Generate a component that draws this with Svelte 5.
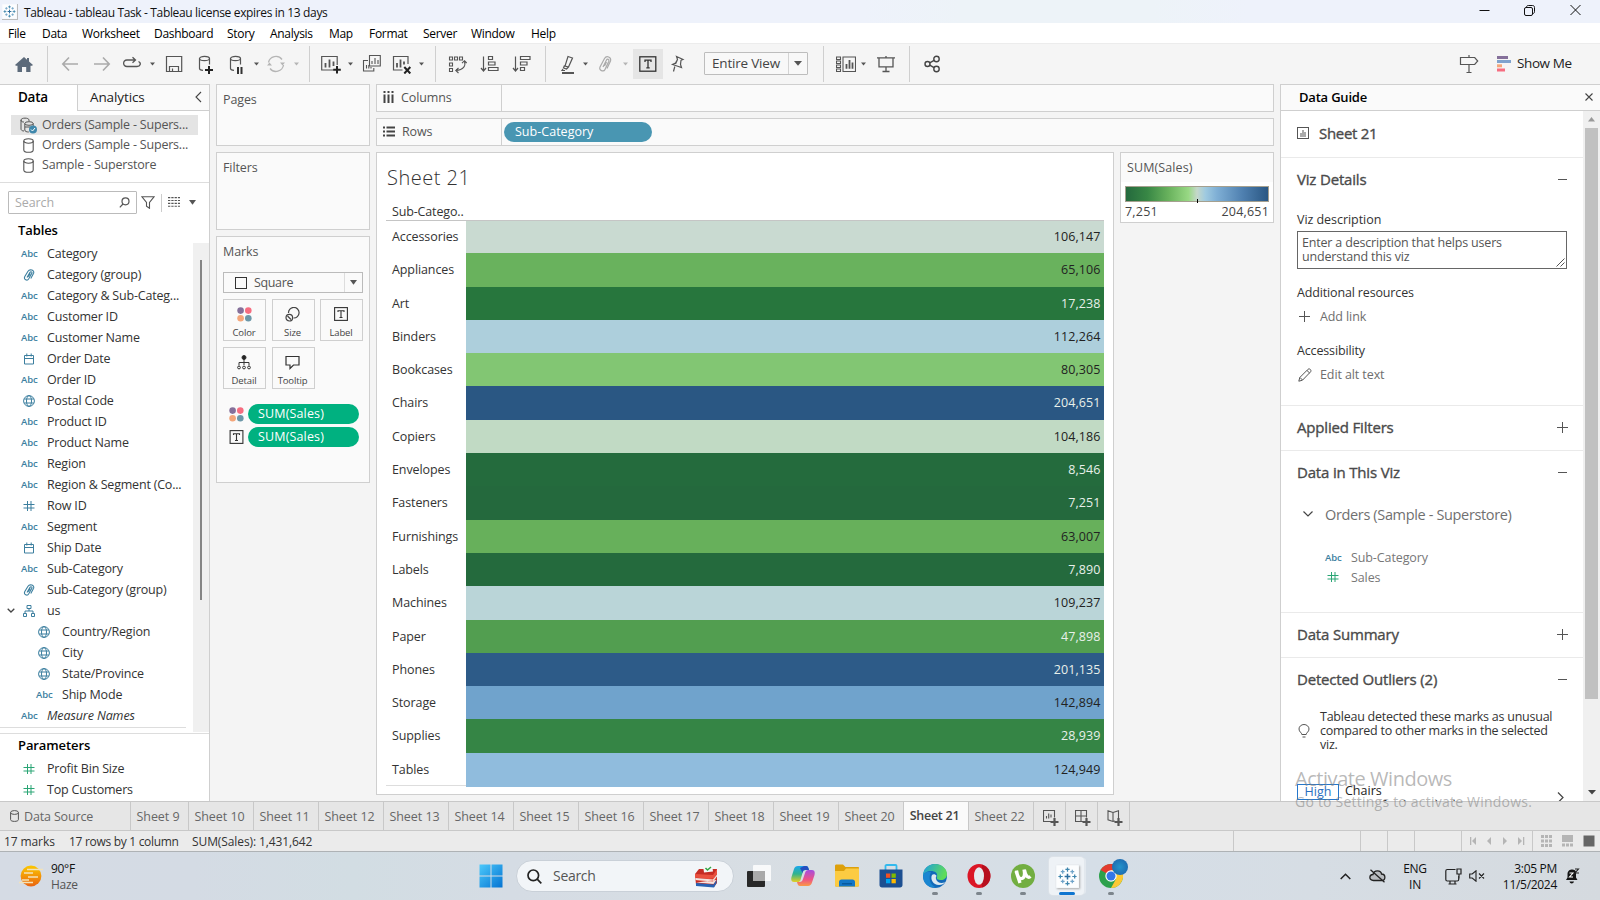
<script>
  const menus = [['File', 34], ['Data', 40], ['Worksheet', 72], ['Dashboard', 73], ['Story', 43], ['Analysis', 59], ['Map', 40], ['Format', 54], ['Server', 48], ['Window', 60], ['Help', 40]];

  const sources = [
    { name: 'Orders (Sample - Supers...', primary: true },
    { name: 'Orders (Sample - Supers...' },
    { name: 'Sample - Superstore' }
  ];

  const fields = [
    ['abc', 'Category'], ['clip', 'Category (group)'], ['abc', 'Category & Sub-Categ...'],
    ['abc', 'Customer ID'], ['abc', 'Customer Name'], ['date', 'Order Date'], ['abc', 'Order ID'],
    ['geo', 'Postal Code'], ['abc', 'Product ID'], ['abc', 'Product Name'], ['abc', 'Region'],
    ['abc', 'Region & Segment (Co...'], ['num', 'Row ID'], ['abc', 'Segment'], ['date', 'Ship Date'],
    ['abc', 'Sub-Category'], ['clip', 'Sub-Category (group)'], ['tree', 'us', 'open'],
    ['geo', 'Country/Region', 'child'], ['geo', 'City', 'child'], ['geo', 'State/Province', 'child'],
    ['abc', 'Ship Mode', 'child'], ['abc', 'Measure Names', 'italic']
  ];

  const rows = [
    ['Accessories', '106,147', '#c9dad1'], ['Appliances', '65,106', '#69b25d'],
    ['Art', '17,238', '#27763d', true], ['Binders', '112,264', '#adcfdc'],
    ['Bookcases', '80,305', '#82c673'], ['Chairs', '204,651', '#2a5783', true],
    ['Copiers', '104,186', '#c1dac4'], ['Envelopes', '8,546', '#246b3d', true],
    ['Fasteners', '7,251', '#24693d', true], ['Furnishings', '63,007', '#67b05b'],
    ['Labels', '7,890', '#246a3d', true], ['Machines', '109,237', '#bad5d8'],
    ['Paper', '47,898', '#529e50', true], ['Phones', '201,135', '#2d5b88', true],
    ['Storage', '142,894', '#70a3cc'], ['Supplies', '28,939', '#358545', true],
    ['Tables', '124,949', '#90bcdd']
  ];

  const sheets = ['Sheet 9', 'Sheet 10', 'Sheet 11', 'Sheet 12', 'Sheet 13', 'Sheet 14', 'Sheet 15', 'Sheet 16', 'Sheet 17', 'Sheet 18', 'Sheet 19', 'Sheet 20', 'Sheet 21', 'Sheet 22'];
</script>

{#snippet caret(dim)}
  <svg class="ic" width="7" height="20" viewBox="0 0 7 20"><path d="M1 8.500h5L3.500 11.500z" fill={dim ? '#b5b5b5' : '#555'} /></svg>
{/snippet}

{#snippet cylinder()}
  <svg width="11" height="15" viewBox="0 0 11 15" fill="none" stroke="#555" stroke-width="1.1"><ellipse cx="5.5" cy="3" rx="4.7" ry="2.2" /><path d="M.8 3v9c0 1.4 2 2.3 4.7 2.3s4.7-.9 4.7-2.3V3" /></svg>
{/snippet}

{#snippet dots()}
  <svg width="15" height="15" viewBox="0 0 15 15"><circle cx="3.6" cy="3.6" r="3.3" fill="#85709a" /><circle cx="11.3" cy="3.6" r="3.3" fill="#f66d80" /><circle cx="3.6" cy="11.3" r="3.3" fill="#f4a67a" /><circle cx="11.3" cy="11.3" r="3.3" fill="#6c97a8" /></svg>
{/snippet}

{#snippet tbox()}
  <svg width="14" height="14" viewBox="0 0 14 14" fill="none" stroke="#333" stroke-width="1.1"><rect x=".6" y=".6" width="12.8" height="12.8" /><path d="M4 5V3.7h6V5M7 3.7v6.8M5.5 10.5h3" /></svg>
{/snippet}

{#snippet fieldIcon(kind)}
  {#if kind === 'abc'}
    <span class="abc">Abc</span>
  {:else}
    <svg width="12" height="12" viewBox="0 0 12 12" fill="none" stroke="currentColor" stroke-width="1">
      {#if kind === 'clip'}
        <path d="M4 8.500 7 3.400c.8-1.300 2.500-.4 1.800.9L5.600 10C4.300 12.200.3 10.700 1.800 7.500L5 2.200C6.700-.4 11.800 1.200 10.600 4.200L7.800 9.400M5.300 7.700 7.200 4.500" stroke-width="1.1" />
      {:else if kind === 'date'}
        <path d="M1.500 2.500h9v8.500h-9zM1.500 5.500h9M3.800.500v3M8.200.500v3" />
      {:else if kind === 'geo'}
        <circle cx="6" cy="6" r="5.400" /><ellipse cx="6" cy="6" rx="2.500" ry="5.400" /><path d="M1.200 4h9.600M1.200 8h9.600" />
      {:else if kind === 'num'}
        <path d="M4.500 1v10M8 1v10M.500 4.500h11M.500 8h11" />
      {:else}
        <path d="M4 .500h4v3H4zM.500 8.500h3v3h-3zM8.500 8.500h3v3h-3zM6 3.500V6M2 8.500V6h8v2.500" />
      {/if}
    </svg>
  {/if}
{/snippet}

{#snippet tableauMark(size)}
  <svg width={size} height={size} viewBox="0 0 24 24" fill="none">
    <rect x=".5" y=".5" width="23" height="23" fill="#fcfdfe" />
    <path d="M12 9v6M9 12h6" stroke="#2f6f9f" stroke-width="1.6" />
    <path d="M12 2.500v4.500M9.800 4.500h4.400M12 17v4.500M9.800 19.500h4.400M2.500 12H7M4.500 9.800v4.400M17 12h4.500M19.500 9.800v4.400" stroke="#3f86ad" stroke-width="1.3" />
    <path d="M7 5v4M5 7h4M17 5v4M15 7h4M7 15v4M5 17h4M17 15v4M15 17h4" stroke="#6fa3c8" stroke-width="1.3" />
  </svg>
{/snippet}

{#snippet plus()}
  <svg width="11" height="11" viewBox="0 0 11 11" stroke="#555"><path d="M5.500 0v11M0 5.500h11" /></svg>
{/snippet}
{#snippet minus()}
  <svg width="11" height="11" viewBox="0 0 11 11" stroke="#555"><path d="M1 5.500h9" /></svg>
{/snippet}

<div class="screen">
  <header class="title">
    <span class="appicon">{@render tableauMark(15)}</span>
    <span class="titletext">Tableau - tableau Task - Tableau license expires in 13 days</span>
    <svg class="win" width="102" height="14" viewBox="0 0 102 14" fill="none" stroke="#111" stroke-width="1"><path d="M.500 7.500h10M91.500 2l10 10M101.500 2l-10 10" /><rect x="45.5" y="4.5" width="8" height="8" rx="1.5" /><path d="M47.500 4.300C47.500 3 48.300 2.500 49.300 2.500h4.200c1.300 0 2 .7 2 2v4.200c0 1-.5 1.800-1.800 1.800" /></svg>
  </header>

  <nav class="menu">
    {#each menus as [m, w]}<span style="width:{w}px">{m}</span>{/each}
  </nav>

  <div class="toolbar">
    <svg class="ic" width="20" height="20" viewBox="0 0 20 20"><path d="M1 11 10 3l3 2.700V4h2v3.500L19 11l-1 .8h-1.500V18h-4.300v-5H8v5H3.500v-6.200H2z" fill="#5c6a7a" /></svg>
    <i class="sep"></i>
    <svg class="ic" width="20" height="20" viewBox="0 0 20 20" fill="none" stroke="#aaa" stroke-width="1.6"><path d="M18 10H3M9 3.500 2.800 10 9 16.500" /></svg>
    <svg class="ic" width="20" height="20" viewBox="0 0 20 20" fill="none" stroke="#aaa" stroke-width="1.6"><path d="M2 10h15M11 3.500l6.200 6.500L11 16.500" /></svg>
    <svg class="ic" width="20" height="20" viewBox="0 0 20 20" fill="none" stroke="#555" stroke-width="1.3"><path d="M16.500 7.500c3 1.300 2 5-1.500 5H5c-4.500 0-4.500-6.500 0-6.500h8M10.500 3.200l3 2.800-3 2.800" /></svg>
    {@render caret()}
    <svg class="ic" width="20" height="20" viewBox="0 0 20 20" fill="none" stroke="#555" stroke-width="1.2"><path d="M2.500 2.500h15.200v15H2.500zM5.500 17.500v-5h9v5M8.500 17v-2.500" /></svg>
    <svg class="ic" width="20" height="20" viewBox="0 0 20 20" fill="none" stroke="#555" stroke-width="1.2"><ellipse cx="7.5" cy="4.5" rx="5" ry="2.2" /><path d="M2.500 4.500v10c0 1 1.500 1.700 3.500 1.900M12.500 4.500v6" /><path d="M12 12v8M8 16h8" stroke="#222" stroke-width="2" /></svg>
    <svg class="ic" width="20" height="20" viewBox="0 0 20 20" fill="none" stroke="#555" stroke-width="1.2"><ellipse cx="7.5" cy="4.5" rx="5" ry="2.2" /><path d="M2.500 4.500v10c0 1 1.500 1.700 3.500 1.900M12.500 4.500v6" /><path d="M10 13v7M13.500 13v7" stroke="#333" stroke-width="2" /></svg>
    {@render caret()}
    <svg class="ic" width="20" height="20" viewBox="0 0 20 20" fill="none" stroke="#b5b5b5" stroke-width="1.3"><path d="M2.500 8.500A7.600 7.600 0 0 1 16 5.500M17.500 11A7.600 7.600 0 0 1 4 14.500" /><path d="M14 8.500h5l-2.500 3zM1 11.500h5l-2.500-3z" fill="#b5b5b5" stroke="none" /></svg>
    {@render caret(true)}
    <i class="sep"></i>
    <svg class="ic" width="20" height="20" viewBox="0 0 20 20" fill="none" stroke="#555" stroke-width="1.2"><path d="M12.500 16H.7V2.500h15.500V11" /><path d="M4.500 13.500V9M8.500 13.500V5.500M12.500 12V7.500" stroke-width="1.8" /><path d="M16 12v7.500M12.200 15.700h7.600" stroke="#222" stroke-width="2" /></svg>
    {@render caret()}
    <svg class="ic" width="20" height="20" viewBox="0 0 20 20" fill="none" stroke="#555" stroke-width="1.1"><path d="M7.500 1.500h10.800V12H7.500zM6 6.500H1.500V17h10.300v-3M10 10V7M13 10V4M16 10V6M4.500 14.500V11M6.800 14.500V11M9 14.500V13" /></svg>
    <svg class="ic" width="20" height="20" viewBox="0 0 20 20" fill="none" stroke="#555" stroke-width="1.2"><path d="M10.500 16H1.500V2.500H16V10" /><path d="M5 13.500V9M8.500 13.500V5.500M12 10.500V7.500" stroke-width="1.8" /><path d="M12.300 13l6 6.500M18.300 13l-6 6.500" stroke="#222" stroke-width="2" /></svg>
    {@render caret()}
    <i class="sep"></i>
    <svg class="ic" width="20" height="20" viewBox="0 0 20 20" fill="none" stroke="#555" stroke-width="1.1"><path d="M1.500 3h3v3h-3zM6.500 3h3v3h-3zM11.500 3h3v3h-3zM1.500 9h3v3h-3zM1.500 14.500h3v3h-3zM16.500 7c1.500 5-1 9-8.500 9.500M14 9.200 16.500 6.700 18.700 9M10.500 14l-2.700 2.500 2.700 2.500" /></svg>
    <svg class="ic" width="20" height="20" viewBox="0 0 20 20" fill="none" stroke="#555" stroke-width="1.2"><path d="M3.500 2.500v14M1 14l2.500 3L6 14M8.500 2.500h4v3h-4zM8.500 8h6.500v3H8.500zM8.500 13.500h9.500v3H8.500z" /></svg>
    <svg class="ic" width="20" height="20" viewBox="0 0 20 20" fill="none" stroke="#555" stroke-width="1.2"><path d="M3.500 2.500v14M1 14l2.500 3L6 14M8.500 2.500H18v3H8.500zM8.500 8H15v3H8.500zM8.500 13.500h4v3h-4z" /></svg>
    <i class="sep"></i>
    <svg class="ic" width="20" height="20" viewBox="0 0 20 20" fill="none" stroke="#555" stroke-width="1.2"><path d="M9 2.500l4.500 1.500-4 9-3.500-1zM5.500 11.500l-1 2.500 3 1 1.500-1.500M4 15l-1 1.500h3" /><path d="M3 19h12" stroke-width="2" /></svg>
    {@render caret()}
    <svg class="ic" width="20" height="20" viewBox="0 0 20 20" fill="none" stroke="#aaa" stroke-width="1.2"><path d="M7 13l3.500-7c.8-1.500 3-.5 2.300 1.200L9 15.500c-1.300 2.800-6.500 1-5-2.500l4.500-8.500C10.500 1 15.600 3 14.500 7L11 14.500M8.500 12l2-4" /></svg>
    {@render caret(true)}
    <span class="ton"><svg width="18" height="16" viewBox="0 0 18 16" fill="none" stroke="#333" stroke-width="1.3"><rect x=".8" y=".8" width="16" height="14.4" /><path d="M6 6V4.200h6V6M9 4.200v7.600M7.300 11.800h3.400" /></svg></span>
    <svg class="ic" width="20" height="20" viewBox="0 0 20 20" fill="none" stroke="#555" stroke-width="1.2"><path d="M9.500 2.500l6.500 3-2 .8-.5 4.200 1 3-4.500-1.500-4.500-1.500 3-1.500 2-3.500zM7.800 12.500 6.500 17.500M10.500 5.500 8.500 10" /></svg>
    <span class="combo"><b>Entire View</b><em><svg width="8" height="5" viewBox="0 0 8 5"><path d="M0 0h8L4 4.800z" fill="#555" /></svg></em></span>
    <i class="sep"></i>
    <svg class="ic" width="20" height="20" viewBox="0 0 20 20" fill="none" stroke="#555" stroke-width="1.1"><path d="M.500 3h4v2.500h-4zM.500 7h4v2.500h-4zM.500 11h4v2.500h-4zM.500 15h4v2.500h-4zM7 3h12.500v14.500H7z" /><path d="M10.500 14.800V10M13.500 14.800V6M16.500 14.800V8.500" stroke-width="1.8" /></svg>
    {@render caret()}
    <svg class="ic" width="20" height="20" viewBox="0 0 20 20" fill="none" stroke="#555" stroke-width="1.3"><path d="M1 3.800h18M3 3.800v9h14v-9M10 2v2M10 12.800V17M6.500 17.500h7" /></svg>
    <i class="sep"></i>
    <svg class="ic" width="20" height="20" viewBox="0 0 20 20" fill="none" stroke="#444" stroke-width="1.4"><circle cx="4.5" cy="10" r="2.5" /><circle cx="13.5" cy="5" r="2.7" /><circle cx="13.5" cy="15" r="2.7" /><path d="M6.700 8.800l4.400-2.500M6.700 11.200l4.400 2.500" /></svg>
    <svg class="ic" width="20" height="20" viewBox="0 0 20 20" fill="none" stroke="#555" stroke-width="1.2"><path d="M10 1v2M1.500 3.500h14.200l3 3.500-3 3.500H1.500zM10 10.500V18M7.500 18.500h5" /></svg>
    <span class="showme"><svg width="15" height="16" viewBox="0 0 15 16"><path d="M0 0h11v3H0z" fill="#85709a" /><path d="M0 4h14v3H0z" fill="#7fa2cd" /><path d="M0 8.300h5v3H0z" fill="#f4a67a" /><path d="M0 12.500h8v3H0z" fill="#f66d80" /></svg>Show Me</span>
  </div>

  <main>
    <aside class="data">
      <div class="tabs"><span class="on">Data</span><span class="off">Analytics<svg width="7" height="12" viewBox="0 0 7 12" fill="none" stroke="#444" stroke-width="1.1"><path d="M6 1 1 6l5 5" /></svg></span></div>
      <div class="sources">
        {#each sources as s}
          <div class="source" class:sel={s.primary}>
            <span class="sicon">
              {#if s.primary}
                <svg width="18" height="17" viewBox="0 0 18 17" fill="none" stroke="#555"><path d="M1 3c0-2.500 8-2.500 8 0M1 3c0 2 2 2 3 2M1 3v9c0 1 1 2 3 2M9 3v1" /><ellipse cx="9" cy="6.5" rx="4.2" ry="1.8" /><path d="M4.800 6.500V13c0 1.500 2 2 4 2M13.200 6.500V9M5 10h5" /><circle cx="13" cy="12.5" r="4" fill="#3f88ac" stroke="none" /><path d="M11 12.500l1.500 1.500 2.500-3" stroke="#fff" /></svg>
              {:else}{@render cylinder()}{/if}
            </span>{s.name}
          </div>
        {/each}
      </div>
      <div class="find">
        <span class="box">Search<svg width="11" height="11" viewBox="0 0 11 11" fill="none" stroke="#555" stroke-width="1.2"><circle cx="6.5" cy="4.3" r="3.5" /><path d="M4 7 .8 10.300" /></svg></span>
        <svg class="funnel" width="14" height="13" viewBox="0 0 14 13" fill="none" stroke="#555" stroke-width="1.1"><path d="M.8.7h12.400L8.500 6.500v5.800l-3-2V6.500z" /></svg>
        <i></i>
        <svg class="grid" width="12" height="10" viewBox="0 0 12 10" stroke="#555" stroke-width="1.1"><path d="M0 .600h12M0 3.500h12M0 6.400h12M0 9.300h12" stroke-dasharray="2.3 1" /></svg>
        <svg class="dn" width="7" height="5" viewBox="0 0 7 5"><path d="M0 0h7L3.500 4.800z" fill="#555" /></svg>
      </div>
      <h3>Tables</h3>
      <div class="listwrap">
        <div class="list">
          {#each fields as [kind, name, mode]}
            <div class="field {mode ?? ''}">
              <span class="chev">{#if mode === 'open'}<svg width="8" height="5" viewBox="0 0 8 5" fill="none" stroke="#444" stroke-width="1.3"><path d="M.7.7 4 4 7.300.7" /></svg>{/if}</span>
              <span class="fi">{@render fieldIcon(kind)}</span><span>{name}</span>
            </div>
          {/each}
        </div>
        <div class="track"><div></div></div>
      </div>
      <div class="params">
        <h3>Parameters</h3>
        {#each ['Profit Bin Size', 'Top Customers'] as p}
          <div class="field"><span class="chev"></span><span class="fi green">{@render fieldIcon('num')}</span><span>{p}</span></div>
        {/each}
      </div>
    </aside>

    <section class="cards">
      <div class="card pages">Pages</div>
      <div class="card filters">Filters</div>
      <div class="card marks">Marks
        <div class="marktype"><i></i><span>Square</span><em><svg width="7" height="5" viewBox="0 0 7 5"><path d="M0 0h7L3.500 4.800z" fill="#555" /></svg></em></div>
        <div class="btns">
          <div>{@render dots()}<span>Color</span></div>
          <div><svg width="15" height="15" viewBox="0 0 15 15" fill="none" stroke="#444" stroke-width="1.2"><path d="M3.500 6A5.300 5.300 0 1 1 8.500 11" /><circle cx="4.3" cy="10.7" r="3.3" /><path d="M2.500 9l3.500 3.500" /></svg><span>Size</span></div>
          <div>{@render tbox()}<span>Label</span></div>
          <div><svg width="14" height="15" viewBox="0 0 14 15" fill="none" stroke="#333"><circle cx="7" cy="2.5" r="2" fill="#222" /><path d="M7 4v6M2 10.500V7.500h10v3" /><circle cx="2" cy="12.5" r="1.4" /><circle cx="7" cy="12.5" r="1.4" /><circle cx="12" cy="12.5" r="1.4" /></svg><span>Detail</span></div>
          <div><svg width="15" height="15" viewBox="0 0 15 15" fill="none" stroke="#333" stroke-width="1.2"><path d="M1 1.500h13v8.500H8.500L5 13.500V10H1z" /></svg><span>Tooltip</span></div>
        </div>
        <div class="enc">{@render dots()}<span>SUM(Sales)</span></div>
        <div class="enc">{@render tbox()}<span>SUM(Sales)</span></div>
      </div>
    </section>

    <section class="work">
      <div class="shelf"><span class="lab"><svg width="11" height="12" viewBox="0 0 11 12" stroke="#444" stroke-width="2"><path d="M1.500 0v2M5.500 0v2M9.500 0v2M1.500 3.500V12M5.500 3.500V12M9.500 3.500V12" /></svg>Columns</span></div>
      <div class="shelf"><span class="lab"><svg width="12" height="11" viewBox="0 0 12 11" stroke="#444" stroke-width="2"><path d="M0 1.500h2M0 5.500h2M0 9.500h2M3.500 1.500H12M3.500 5.500H12M3.500 9.500H12" /></svg>Rows</span><span class="pill">Sub-Category</span></div>
      <div class="lower">
        <div class="viz">
          <h1>Sheet 21</h1>
          <div class="colhead">Sub-Catego..</div>
          <div class="table">
            {#each rows as [name, value, color, light]}
              <div class="row"><span>{name}</span><b class:light style="background:{color}">{value}</b></div>
            {/each}
          </div>
        </div>
        <div class="legend"><div class="lt">SUM(Sales)</div><div class="ramp"><i></i></div><div class="lv"><span>7,251</span><span>204,651</span></div></div>
      </div>
    </section>

    <aside class="guide">
      <div class="ghead">Data Guide<svg width="8" height="8" viewBox="0 0 8 8" stroke="#444" stroke-width="1.1"><path d="M.5.5l7 7M7.500.5l-7 7" /></svg></div>
      <div class="gbody">
        <div class="gcontent">
          <div class="gsheet"><svg width="12" height="12" viewBox="0 0 12 12"><rect x=".5" y=".5" width="11" height="11" fill="none" stroke="#555" /><path d="M3 10V6h2V3h2v2h2v5z" fill="#aaa" /></svg>Sheet 21</div>
          <div class="gsec details">
            <h2>Viz Details{@render minus()}</h2>
            <div class="gl first">Viz description</div>
            <div class="ta">Enter a description that helps users<br />understand this viz<svg width="9" height="9" viewBox="0 0 9 9" stroke="#555"><path d="M.500 8.500l8-8M4.500 8.500l4-4" /></svg></div>
            <div class="gl res">Additional resources</div>
            <div class="gact">{@render plus()}Add link</div>
            <div class="gl acc">Accessibility</div>
            <div class="gact edit"><svg width="14" height="14" viewBox="0 0 14 14" fill="none" stroke="#555"><path d="M.8 13.200l1-3.700L10 1.300c1.500-1.300 3.800.8 2.600 2.500L4.500 12.200zM2 9.500l2.500 2.500M9 2.500l2.600 2.500" /></svg>Edit alt text</div>
          </div>
          <div class="gsec short"><h2>Applied Filters{@render plus()}</h2></div>
          <div class="gsec indata">
            <h2>Data in This Viz{@render minus()}</h2>
            <div class="ds"><svg width="10" height="6" viewBox="0 0 10 6" fill="none" stroke="#444" stroke-width="1.2"><path d="M.5.5 5 5 9.500.5" /></svg>Orders (Sample - Superstore)</div>
            <div class="df"><span class="fi"><span class="abc">Abc</span></span>Sub-Category</div>
            <div class="df"><span class="fi green">{@render fieldIcon('num')}</span>Sales</div>
          </div>
          <div class="gsec short"><h2>Data Summary{@render plus()}</h2></div>
          <div class="gsec out">
            <h2>Detected Outliers (2){@render minus()}</h2>
            <div class="tip"><svg width="12" height="15" viewBox="0 0 12 15" fill="none" stroke="#555"><path d="M3.800 10.500C3.800 8.500 1 8 1 5a5 4.500 0 0 1 10 0c0 3-2.800 3.500-2.800 5.500zM4.500 13h3" /></svg><span>Tableau detected these marks as unusual<br />compared to other marks in the selected<br />viz.</span></div>
            <div class="hi"><span class="high">High</span><span class="nm">Chairs<br />Sum of Sales is higher</span><svg width="7" height="11" viewBox="0 0 7 11" fill="none" stroke="#444" stroke-width="1.2"><path d="M1 .5l5 5-5 5" /></svg></div>
          </div>
        </div>
        <div class="gscroll"><svg width="7" height="5" viewBox="0 0 7 5"><path d="M0 4.500h7L3.500 0z" fill="#999" /></svg><div></div><svg width="8" height="5" viewBox="0 0 8 5"><path d="M0 0h8L4 4.500z" fill="#444" /></svg></div>
      </div>
    </aside>
  </main>

  <div class="sheets">
    <span class="dsrc"><svg width="9" height="12" viewBox="0 0 9 12" fill="none" stroke="#555"><ellipse cx="4.5" cy="2.5" rx="3.9" ry="1.9" /><path d="M.6 2.500v7.200c0 1 1.700 1.700 3.900 1.700s3.900-.7 3.900-1.700V2.500" /></svg>Data Source</span>
    {#each sheets as s, i}<span class="sheet" class:nine={i === 0} class:active={s === 'Sheet 21'}>{s}</span>{/each}
    {#each [0, 1, 2] as k}
      <span class="new"><svg width="16" height="16" viewBox="0 0 16 16" fill="none" stroke="#555" stroke-width="1.1">
        {#if k === 0}<path d="M8.500 11.500h-8v-11h11v7M3.500 8.500V6M5.700 8.500V3.500M8 7.500V4.500" />
        {:else if k === 1}<path d="M8.500 11.500h-8v-11h11v7M6 .5v11M.500 6h11" />
        {:else}<path d="M6 2.500 1 .8v9L6 11.500l2-.5M6 2.500v9M6 2.500 11.500.8V8" />{/if}
        <path d="M11.500 8v8M7.500 12h8" stroke-width="2.2" /></svg></span>
    {/each}
  </div>

  <div class="status">
    <span>17 marks</span><span>17 rows by 1 column</span><span>SUM(Sales): 1,431,642</span>
    <i></i><i></i><i></i><i></i>
    <div class="pager"><svg width="56" height="8" viewBox="0 0 56 8" fill="#b5b5b5"><path d="M1 0h1.300v8H1zM7 0v8L3 4zM22 0v8l-4-4zM34 0v8l4-4zM49 0v8l4-4zM54 0h1.300v8H54z" /></svg></div>
    <div class="views"><svg width="54" height="12" viewBox="0 0 54 12" fill="#b5b5b5"><path d="M0 0h3v3H0zM4 0h3v3H4zM8 0h3v3H8zM0 4.500h3v3H0zM4 4.500h3v3H4zM8 4.500h3v3H8zM0 9h3v3H0zM4 9h3v3H4zM8 9h3v3H8zM21 0h11v7H21zM21 8.500h3v3h-3zM25 8.500h3v3h-3zM29 8.500h3v3h-3z" /><path d="M42.500.5h11v11h-11z" fill="#666" /></svg></div>
  </div>

  <footer>
    <div class="weather">
      <svg width="24" height="22" viewBox="0 0 24 22"><defs><linearGradient id="sun" x2="0" y2="1"><stop offset="0" stop-color="#fbc800" /><stop offset="1" stop-color="#ea6410" /></linearGradient></defs><circle cx="12" cy="11" r="10.4" fill="url(#sun)" /><path d="M8 4.500h16M5 8h9M9 12h10M3 15h7M0 17.500h14" stroke="#f3e2b8" stroke-width="1.5" /></svg>
      <span>90°F<br /><em>Haze</em></span>
    </div>
    <svg class="start" width="24" height="24" viewBox="0 0 24 24"><defs><linearGradient id="wn" x2="1" y2="1"><stop offset="0" stop-color="#4cc9fb" /><stop offset="1" stop-color="#0473d2" /></linearGradient></defs><path d="M.5.5h11v11H.500zM12.500.5h11v11h-11zM.5 12.500h11v11H.500zM12.500 12.500h11v11h-11z" fill="url(#wn)" /></svg>
    <div class="search"><svg width="15" height="15" viewBox="0 0 15 15" fill="none" stroke="#222" stroke-width="1.7"><circle cx="6.3" cy="6.3" r="5.3" /><path d="M10.200 10.200 14.300 14.300" /></svg><span>Search</span>
      <svg width="24" height="24" viewBox="0 0 24 24"><path d="M1 10 5 5h18v14l-3 4L2 21z" fill="#c52c24" /><path d="M1 10l18 1 4-6v5l-4 5.500L1 13.500zM1 16.500l18 1.500 4-4" fill="#e9513f" /><path d="M1.500 14l17.500 1.500 4-5v2l-4 5L1.500 16zM2 18.500l17.500 1.500 3-4" fill="#f3e4e0" /><path d="M2 19l17.500 1.500 3-4.500v3L20 23.500 2 22z" fill="#2762b3" /><path d="M9 1.500l9-1 1 7-9 1z" fill="#f6f7f8" /><path d="M11.500 4l2 2L17 3" stroke="#32a645" stroke-width="1.5" fill="none" /></svg></div>
    <div class="apps">
      <span><svg width="24" height="24" viewBox="0 0 24 24"><rect x="6" y="1" width="18" height="16" rx="1" fill="#f8f9fa" /><rect y="7" width="18" height="16" rx="1" fill="#282828" /><path d="M6 7h12v10H6z" fill="#aaa" /></svg></span>
      <span><svg width="24" height="24" viewBox="0 0 24 24"><defs><linearGradient id="c1" x2="0" y2="1"><stop offset="0" stop-color="#1aa7ee" /><stop offset=".5" stop-color="#32b38d" /><stop offset="1" stop-color="#e5cf22" /></linearGradient><linearGradient id="c2" x2="0" y2="1"><stop offset="0" stop-color="#a54de0" /><stop offset=".6" stop-color="#ee5585" /><stop offset="1" stop-color="#fa9a45" /></linearGradient></defs><path d="M7 2h8c2 0 2.500 2 3 4h-3c-2 0-3 1-3.500 3l-2 7C9 17.500 8 18 6.500 18H3c-3 0-3-3-2.500-5L3 5C3.600 3 5 2 7 2z" fill="url(#c1)" /><path d="M13 2h2c2 0 2.500 2 3 4h-4c-2 0-2 1-2.500 3L9 4z" fill="#244fc1" /><path d="M17.500 6H21c3 0 3 3 2.500 5L21 18.500c-.6 2-2 3.500-4 3.500H9c-2 0-2.500-2-3-4h2.500c2 0 3-1 3.500-3l2-6c.5-2 1.500-3 3.500-3z" fill="url(#c2)" /></svg></span>
      <span><svg width="24" height="24" viewBox="0 0 24 24"><path d="M0 2c0-1 .5-1.500 1.500-1.500H8L10.500 3H23c.7 0 1 .5 1 1v17c0 1-.5 1.500-1.500 1.500h-21C.5 22.500 0 22 0 21z" fill="#dda00b" /><path d="M0 7h9l2-2.500h13V21c0 1-.5 1.500-1.500 1.500h-21C.5 22.500 0 22 0 21z" fill="#fccb42" /><path d="M4 22.500V18c0-1.500 1-2.500 2.500-2.500h11c1.500 0 2.500 1 2.500 2.500v4.500z" fill="#1377c7" /><path d="M7 19h10v1.500H7z" fill="#075a9e" /></svg></span>
      <span><svg width="24" height="24" viewBox="0 0 24 24"><path d="M6.500 6V1.800c0-.6.5-.8 1-.8h9c.5 0 1 .2 1 .8V6" fill="none" stroke="#32b9ed" stroke-width="1.8" /><path d="M.5 5.500h23V21c0 1.500-1 2.500-2.500 2.500H3C1.500 23.500.5 22.500.5 21z" fill="#1c4f91" /><path d="M7 9.500h4.300v4.300H7z" fill="#f25022" /><path d="M12.500 9.500h4.300v4.300h-4.300z" fill="#7fba00" /><path d="M7 15h4.300v4.300H7z" fill="#00a4ef" /><path d="M12.500 15h4.300v4.300h-4.300z" fill="#ffb900" /></svg></span>
      <span class="run"><svg width="24" height="24" viewBox="0 0 24 24"><defs><linearGradient id="ed" x2="1" y2=".3"><stop offset="0" stop-color="#1b9de2" /><stop offset="1" stop-color="#5fdc5a" /></linearGradient></defs><circle cx="12" cy="12" r="12" fill="#1269b9" /><path d="M0 12C0 5 5 0 12 0s12 5 12 10c0 4-3 6-6 6s-5-1-4-3C15 9 12 7 8 7S1 9 0 12z" fill="url(#ed)" /><path d="M9 11c-2 4 1 10 7 10 3 0 5-1 6-3-3 2-8 1-9-3-.6-2 .6-3 .6-3-.8-2-3.600-2.500-4.600-1z" fill="#dce8f0" /><path d="M8 8c-3 6-1 13 5 15.500C5 24 0 19 0 12 1 9 4 7 8 8z" fill="#1a86d1" /></svg></span>
      <span class="run"><svg width="24" height="24" viewBox="0 0 24 24"><ellipse cx="12" cy="12" rx="11.5" ry="12" fill="#db1626" /><path d="M15 .5A12 12 0 0 1 15 23.500z" fill="#9f0d1b" opacity=".6" /><ellipse cx="12" cy="12" rx="5" ry="8.7" fill="#e5ebf0" /></svg></span>
      <span class="run"><svg width="24" height="24" viewBox="0 0 24 24"><circle cx="12" cy="12" r="12" fill="#72ae41" /><path d="M5 7l4 12M5.500 6.500c1 6 2.500 9 5.500 8s3-4 2-9M13.500 6c1 5 3 9 6 6.500" stroke="#fff" stroke-width="3.3" fill="none" /></svg></span>
      <span class="run act">{@render tableauMark(23)}</span>
      <span class="run chrome"><svg width="24" height="24" viewBox="0 0 24 24"><circle cx="12" cy="12" r="12" fill="#2da14c" /><path d="M12 12 1.600 6A12 12 0 0 1 22.400 6z" fill="#e33b2e" /><path d="M12 6h10.400A12 12 0 0 1 12 24l5-9z" fill="#fcc934" /><circle cx="12" cy="12" r="5.7" fill="#fff" /><circle cx="12" cy="12" r="4.5" fill="#3477e8" /></svg><em></em></span>
    </div>
    <div class="tray">
      <svg class="up" width="11" height="7" viewBox="0 0 11 7" fill="none" stroke="#222" stroke-width="1.5"><path d="M.7 6 5.500 1.200 10.300 6" /></svg>
      <svg class="cloud" width="17" height="14" viewBox="0 0 17 14" fill="#b9bcc0" stroke="#222" stroke-width="1.3"><path d="M4.500 11.500C-.5 11.500 0 5.500 4 5.500 5 .5 12 1 12.500 5c4.500 0 4.500 6.500 0 6.500z" /><path d="M1.500.7l14 12.500" /></svg>
      <span class="lang">ENG<br />IN</span>
      <svg class="mon" width="17" height="17" viewBox="0 0 17 17" fill="none" stroke="#222" stroke-width="1.2"><path d="M10.500 1.500H2.300C1.500 1.500.8 2 .8 3v8.500c0 1 .7 1.500 1.500 1.500h9.900c.8 0 1.500-.5 1.500-1.500V8M5 13v3M10 13v3M3.500 16h8M12 1h4v5h-4zM14 6v4.500" /></svg>
      <svg class="spk" width="16" height="12" viewBox="0 0 16 12" fill="none" stroke="#222" stroke-width="1.1"><path d="M.7 4h2.500L7 .8v10.400L3.200 8H.7zM10 3.500l5 5M15 3.500l-5 5" /></svg>
      <span class="clock">3:05 PM<br />11/5/2024</span>
      <svg class="bell" width="15" height="16" viewBox="0 0 15 16"><path d="M1 12l1.500-2.500V6c0-6 8.500-5.500 8.500-2v5.500l1.500 2.500zM4.500 13.500h4.500C8.500 16 5 16 4.500 13.500z" fill="#151515" /><path d="M4.500 5h3.500L4.500 9h3.500" stroke="#fff" stroke-width="1.1" fill="none" /><path d="M10 1h3.500L10 5h4" stroke="#222" stroke-width="1.1" fill="none" /></svg>
    </div>
  </footer>

  <div class="activate"><div>Activate Windows</div><p>Go to Settings to activate Windows.</p></div>
</div>

<style>
  :global(body) { margin: 0; overflow: hidden; }
  .screen, .screen * { box-sizing: border-box; }
  .screen { position: relative; width: 1600px; height: 900px; overflow: hidden; display: flex; flex-direction: column; background: #f5f5f5; font: 12.5px/21px "Open Sans", "Noto Sans", sans-serif; color: #333; white-space: nowrap; }
  svg { display: block; flex: none; }
  h1, h2, h3, p { margin: 0; }
  i, em, b { font-style: normal; font-weight: 400; }

  .title { height: 23px; flex: none; display: flex; align-items: center; background: linear-gradient(90deg, #eef2fb 54%, #edf3f8 60%, #edf3f8 72%, #eef2fb 78%); color: #111; font-size: 12px; letter-spacing: -.35px; padding-right: 19px; }
  .titletext { padding-top: 1px; }
  .appicon { margin: 0 6px 0 2px; border: 1px solid #bbb; border-width: 0 1px 1px 0; }
  .win { margin-left: auto; margin-top: -3px; }
  .menu { height: 20px; flex: none; background: #fff; display: flex; padding-left: 8px; color: #000; font-size: 12px; line-height: 22px; letter-spacing: -.3px; }
  .toolbar { height: 41px; flex: none; padding: 0 0 1px 14px; border-top: 1px solid #ececec; display: grid; align-items: center; grid-template-columns: 33px 13px 32px 30px 27px 15px 33px 31px 25px 13px 27px 16px 12px 26px 15px 30px 26px 17px 13px 32px 32px 33px 14px 23px 14px 26px 11px 34px 37px 119px 13px 24px 16px 33px 14px 536px 38px auto; }
  .sep { width: 1px; height: 36px; background: #cfcfcf; }
  .ton { width: 30px; height: 30px; background: #e5e5e5; display: flex; align-items: center; justify-content: center; }
  .combo { width: 104px; height: 23px; border: 1px solid #bdbdbd; border-radius: 1px; display: flex; background: #f8f8f8; color: #444; font-size: 13.5px; line-height: 20px; }
  .combo b { flex: 1; padding-left: 7px; letter-spacing: -.2px; }
  .combo em { width: 19px; border-left: 1px solid #d4d4d4; display: flex; align-items: center; justify-content: center; }
  .showme { display: flex; align-items: center; gap: 5px; font-size: 13.5px; color: #222; letter-spacing: -.4px; }

  main { height: 717px; flex: none; display: flex; background: #f4f4f4; }
  .data { width: 210px; border-right: 1px solid #cfcfcf; background: #fff; display: flex; flex-direction: column; }
  .tabs { height: 27px; display: flex; border-top: 1px solid #cfcfcf; font-size: 13.5px; line-height: 25px; color: #222; flex: none; letter-spacing: -.1px; }
  .tabs .on { width: 77px; padding-left: 18px; font-weight: 600; color: #000; letter-spacing: -.3px; }
  .tabs .off { flex: 1; display: flex; align-items: center; justify-content: space-between; padding: 0 7px 1px 12px; background: #fafafa; border-left: 1px solid #cfcfcf; border-bottom: 1px solid #cfcfcf; }
  .sources { height: 72px; padding: 4px 11px 0; border-bottom: 1px solid #ddd; flex: none; }
  .source { height: 20px; line-height: 20px; display: flex; align-items: center; color: #555; letter-spacing: -.2px; }
  .source.sel { background: #e4e4e4; }
  .sicon { width: 31px; padding-left: 9px; display: flex; }
  .source:not(.sel) .sicon { padding-left: 12px; }
  .find { height: 39px; padding: 0 0 0 8px; display: flex; align-items: center; flex: none; }
  .box { width: 129px; height: 23px; border: 1px solid #bbb; border-radius: 1px; display: flex; align-items: center; justify-content: space-between; padding: 0 6px 0 6px; color: #aaa; letter-spacing: -.1px; }
  .funnel { margin-left: 4px; }
  .find i { width: 1px; height: 18px; background: #ccc; margin: 0 6px; }
  .grid, .dn { margin-top: -1px; }
  .dn { margin-left: 9px; }
  h3 { font-size: 13px; font-weight: 600; color: #000; padding-left: 18px; height: 21px; line-height: 17px; flex: none; letter-spacing: -.1px; }
  .listwrap { height: 490px; display: flex; justify-content: space-between; flex: none; }
  .list { width: 186px; height: 485px; border-bottom: 1px solid #ddd; background: #fff; }
  .field { height: 21px; display: flex; align-items: center; letter-spacing: -.2px; color: #333; }
  .chev { width: 17px; padding-left: 7px; display: flex; }
  .fi { width: 30px; padding-left: 6px; color: #3c7f9f; display: flex; flex: none; }
  .fi .abc { margin-left: -2px; }
  .fi.green { color: #2aa575; }
  .abc { font-size: 9.5px; font-weight: 600; letter-spacing: -.05px; line-height: 20px; padding-top: 1px; }
  .child .chev { width: 32px; }
  .italic { font-style: italic; letter-spacing: -.1px; }
  .italic .abc { font-style: normal; }
  .track { width: 16px; background: #f0f0f0; padding: 17px 0 0 7px; height: 489px; }
  .track div { width: 2px; height: 340px; background: #858585; }
  .params { height: 68px; border-top: 1px solid #ddd; padding-top: 1px; overflow: hidden; }
  .params h3 { height: 23px; line-height: 21px; }

  .cards { width: 166px; padding-left: 6px; display: flex; flex-direction: column; gap: 6px; }
  .card { width: 154px; border: 1px solid #cfcfcf; background: #fafafa; padding: 4px 6px; color: #555; letter-spacing: -.1px; }
  .pages { height: 62px; }
  .filters { height: 78px; }
  .marks { height: 247px; }
  .marktype { height: 21px; width: 140px; margin-top: 10px; border: 1px solid #bbb; display: flex; align-items: center; color: #555; letter-spacing: -.35px; }
  .marktype i { width: 12px; height: 12px; border: 1.5px solid #333; margin: 0 7px 0 11px; }
  .marktype span { flex: 1; }
  .marktype em { width: 18px; height: 19px; border-left: 1px solid #ddd; display: flex; align-items: center; justify-content: center; }
  .btns { display: grid; grid-template-columns: repeat(3, 43px); gap: 6px 5.5px; margin-top: 6px; }
  .btns div { height: 42px; border: 1px solid #cfcfcf; display: flex; flex-direction: column; align-items: center; padding: 7px 1px 0 0; font-size: 9.5px; line-height: 13px; color: #444; letter-spacing: -.15px; }
  .btns span { margin-top: auto; padding-bottom: 1px; }
  .enc { display: flex; align-items: center; gap: 4px; height: 20px; padding-left: 6px; margin-top: 3px; }
  .btns + .enc { margin-top: 15px; }
  .enc :global(svg) { width: 15px; }
  .enc span { width: 111px; height: 20px; line-height: 20px; border-radius: 10px; background: #00b180; color: #fff; padding-left: 10px; letter-spacing: .15px; }

  .work { width: 904px; display: flex; flex-direction: column; gap: 6px; }
  .shelf { width: 898px; height: 28px; border: 1px solid #cfcfcf; background: #fafafa; display: flex; align-items: center; flex: none; }
  .lab { width: 125px; height: 26px; border-right: 1px solid #cfcfcf; padding: 0 0 2px 6px; display: flex; align-items: center; gap: 7px; color: #555; letter-spacing: -.1px; }
  .pill { width: 148px; height: 20px; margin-left: 2px; border-radius: 10px; background: #4996b2; color: #fff; line-height: 20px; padding-left: 11px; letter-spacing: .02px; }
  .lower { display: flex; gap: 6px; height: 643px; }
  .viz { width: 738px; height: 643px; background: #fff; border: 1px solid #cfcfcf; padding: 0 9px; }
  h1 { font-size: 20px; font-weight: 300; line-height: 50px; height: 49px; color: #333; padding-left: 1px; letter-spacing: .5px; }
  .colhead { position: relative; height: 19px; margin-bottom: -1px; line-height: 20px; padding-left: 6px; border-bottom: 1px solid #c5c5c5; letter-spacing: -.15px; }
  .table { height: 566px; display: grid; grid-template-rows: repeat(17, 1fr); border-bottom: 1px solid #ddd; }
  .row { display: grid; grid-template-columns: 80px 1fr; line-height: 34px; min-height: 0; height: 33.3px; }
  .row span { padding-left: 6px; letter-spacing: -.1px; }
  .row b { text-align: right; padding-right: 3.5px; color: #222; letter-spacing: .08px; }
  .row b.light { color: #e8f0ea; }
  .legend { width: 154px; height: 71px; border: 1px solid #cfcfcf; background: #fff; }
  .lt { background: #fafafa; height: 29px; line-height: 29px; padding-left: 6px; color: #555; letter-spacing: .1px; }
  .ramp { height: 16px; margin: 4px 4px 0; width: 144px; border: 1px solid #a5a08f; background: linear-gradient(90deg, #24693d, #388745 15%, #69b25d 30%, #98d884 44%, #c5d8ca 50%, #9fcae0 56%, #7fafd5 64%, #4f80b0 82%, #2a5783); }
  .ramp i { display: block; width: 1px; height: 4px; background: #000; margin-left: 71px; transform: translateY(12px); }
  .lv { display: flex; justify-content: space-between; padding: 0 4px; line-height: 20px; color: #444; letter-spacing: .2px; }

  .guide { width: 320px; border-left: 1px solid #cfcfcf; border-top: 1px solid #cfcfcf; background: #fff; }
  .ghead { height: 26px; background: #fafafa; border-bottom: 1px solid #cfcfcf; display: flex; align-items: center; justify-content: space-between; font-size: 13px; font-weight: 600; color: #000; padding: 0 7px 1px 18px; letter-spacing: -.2px; }
  .gbody { display: flex; height: 690px; overflow: hidden; }
  .gcontent { width: 302px; height: 690px; overflow: hidden; }
  .gscroll { width: 17px; background: #f0f0f0; display: flex; flex-direction: column; align-items: center; padding-top: 6px; }
  .gscroll div { width: 13px; height: 571px; background: #c1c1c1; margin: 6px 0 91px; flex: none; }
  .gsheet { height: 47px; border-bottom: 1px solid #eaeaea; display: flex; align-items: center; gap: 10px; padding: 0 0 2px 16px; font-size: 15px; color: #4a4a4a; -webkit-text-stroke: .35px #4a4a4a; letter-spacing: -.3px; }
  .gsec { border-bottom: 1px solid #eaeaea; padding: 0 15px 0 16px; }
  .gsec h2 { height: 44px; display: flex; align-items: center; justify-content: space-between; font-size: 15px; font-weight: 400; color: #4a4a4a; -webkit-text-stroke: .35px #4a4a4a; letter-spacing: -.18px; padding-bottom: 2px; }
  .gsec h2 :global(svg) { margin-top: 1px; }
  .details { height: 248px; }
  .gl { color: #333; line-height: 18px; letter-spacing: -.15px; }
  .first { margin-top: 9px; letter-spacing: -.05px; }
  .ta { position: relative; width: 270px; height: 38px; margin-top: 2px; padding: 4px; border: 1px solid #666; line-height: 14px; color: #555; letter-spacing: -.18px; }
  .ta svg { position: absolute; right: 1px; bottom: 1px; }
  .res { margin-top: 15px; }
  .gact { display: flex; align-items: center; gap: 10px; height: 21px; padding-left: 2px; color: #6e6e6e; margin-top: 4px; letter-spacing: -.1px; }
  .acc { margin-top: 15px; }
  .edit { gap: 8px; padding-left: 1px; }
  .short { height: 45px; }
  .indata { height: 162px; }
  .ds { display: flex; align-items: center; gap: 12px; height: 40px; padding: 0 0 2px 6px; font-size: 14.5px; color: #707070; letter-spacing: -.35px; margin-bottom: 12px; }
  .df { height: 20px; display: flex; align-items: center; padding-left: 24px; color: #777; letter-spacing: -.1px; }
  .out { border: 0; }
  .tip { display: flex; gap: 10px; align-items: center; line-height: 14px; height: 58px; color: #333; padding-left: 1px; letter-spacing: -.24px; }
  .hi { display: flex; margin-top: 24px; height: 30px; }
  .high { width: 42px; height: 16px; border: 1px solid #2577cc; color: #2a6fc0; line-height: 14px; text-align: center; }
  .nm { margin-left: 6px; line-height: 15px; margin-top: -1px; color: #222; flex: 1; }
  .hi svg { margin: 8px 4px 0 0; }

  .sheets { height: 30px; flex: none; border-top: 1px solid #c8c8c8; border-bottom: 1px solid #c8c8c8; background: #e6e6e6; display: flex; color: #666; line-height: 29px; }
  .sheets > span { border-right: 1px solid #c8c8c8; flex: none; }
  .dsrc { width: 131px; display: flex; gap: 5px; padding-left: 10px; letter-spacing: -.15px; }
  .dsrc svg { margin-top: 8px; }
  .sheet { width: 65px; text-align: center; letter-spacing: -.05px; padding-right: 3px; }
  .sheet.nine { width: 58px; }
  .sheet.active { background: #fafafa; font-weight: 600; color: #444; line-height: 27px; letter-spacing: -.25px; }
  .new { width: 32px; display: flex; padding: 8px 0 0 9px; }
  .status { height: 21px; flex: none; background: #ebebeb; border-bottom: 1px solid #aeb2b5; display: grid; grid-template-columns: 65px 123px 1041px 127px 27px 27px 47px 71px 68px; padding-left: 4px; line-height: 22px; color: #333; font-size: 12px; letter-spacing: -.1px; }
  .status span:nth-child(2) { letter-spacing: -.3px; }
  .status i, .pager, .views { border-left: 1px solid #c8c8c8; height: 20px; }
  .pager, .views { display: flex; align-items: center; padding-left: 7px; }
  .views { padding-left: 8px; }

  footer { height: 48px; flex: none; display: flex; align-items: center; background: linear-gradient(90deg, #d5dbe4, #d4dbe4 12%, #d2dde3 22%, #d5dce4 32%, #d8dee3 52%, #d5dee7 68%, #d6dde4 82%, #d5dadf); font-size: 12px; line-height: 16px; color: #111; letter-spacing: -.3px; }
  .weather { width: 479px; display: flex; gap: 8px; padding: 0 0 1px 19px; align-items: center; }
  .weather span { padding-top: 2px; }
  .weather em { color: #555; }
  .search { width: 218px; height: 32px; margin: 0 3px 0 13px; border-radius: 16px; background: #f2f5f8; border: 1px solid #c9d0d8; display: flex; align-items: center; padding: 0 15px 0 10px; font-size: 14px; color: #555; }
  .search span { flex: 1; padding-left: 11px; }
  .apps { display: flex; width: 396px; }
  .apps span { position: relative; width: 44px; height: 48px; display: flex; align-items: center; justify-content: center; }
  .apps .run::after { content: ''; position: absolute; bottom: 5px; left: 19px; width: 6px; height: 3px; border-radius: 2px; background: #7d858c; }
  .apps .act::before { content: ''; position: absolute; z-index: 0; left: 4px; top: 5px; width: 35px; height: 38px; border-radius: 4px; background: #eef2f6; box-shadow: 3px 0 0 -1px #e2e8ee, 0 0 0 1px #dce2e8; }
  .apps .act :global(svg) { position: relative; box-shadow: 1px 1px 2px #aaa; }
  .apps .act::after { width: 16px; left: 14px; background: #0f75d0; }
  .chrome em { position: absolute; left: 23px; top: 7px; width: 16px; height: 16px; border-radius: 50%; background: radial-gradient(#2393cb, #1d5fa8); }
  .tray { flex: 1; display: flex; align-items: center; padding-left: 207px; }
  .cloud { margin-left: 18px; }
  .lang { width: 58px; text-align: center; padding-top: 2px; }
  .mon { margin-left: 1px; }
  .spk { margin-left: 7px; }
  .clock { width: 72px; text-align: right; padding-top: 1px; }
  .bell { margin-left: 8px; }

  .activate { position: absolute; left: 1295px; top: 765px; color: rgba(125, 125, 125, .55); font-size: 20px; line-height: 28px; letter-spacing: -.45px; }
  .activate p { font-size: 14px; line-height: 18px; letter-spacing: .22px; }
</style>
